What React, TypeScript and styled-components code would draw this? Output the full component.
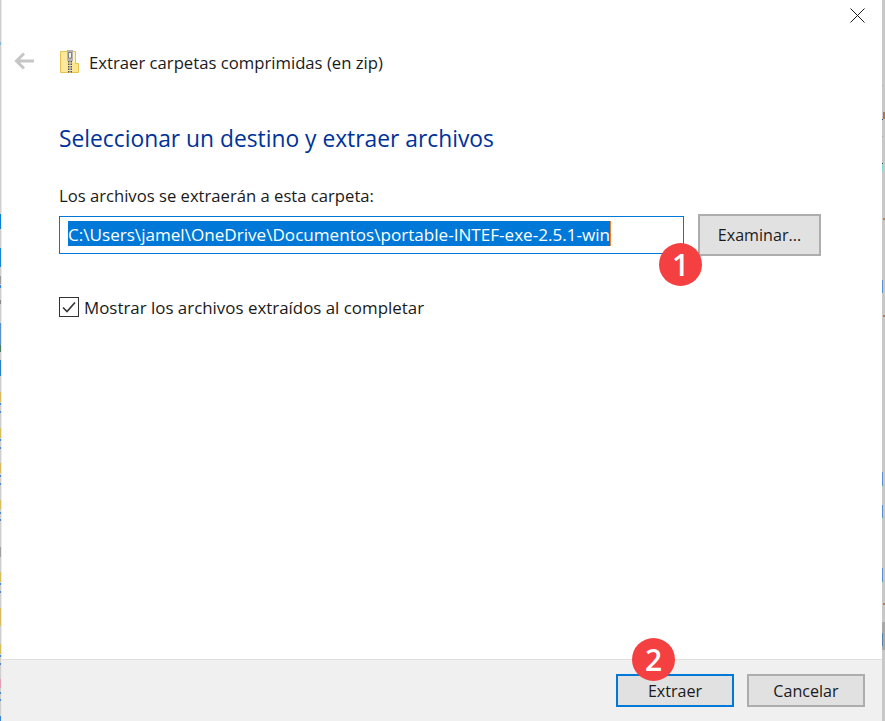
import React from "react";
import styled, { createGlobalStyle } from "styled-components";

// coloured ticks of the windows behind the dialog: [from, to, colour]
const leftMarks: [number, number, string][] = [
    [42, 45, "#7fb4e0"], [214, 229, "#0f7fd0"], [248, 267, "#1a86d0"], [276, 284, "#9a9a9a"],
    [285, 288, "#3f83d0"], [300, 304, "#8a8a8a"], [323, 345, "#5a8fd0"], [345, 352, "#4f7a60"],
    [360, 376, "#2f7fc8"], [392, 402, "#d9bc62"], [403, 405, "#4f86d0"], [411, 413, "#4f86d0"],
    [428, 438, "#d9bc62"], [439, 441, "#4f86d0"], [447, 449, "#4f86d0"], [463, 473, "#d9bc62"],
    [475, 477, "#4f86d0"], [483, 485, "#4f86d0"], [500, 509, "#d9bc62"], [512, 514, "#4f86d0"],
    [519, 521, "#4f86d0"], [547, 557, "#a0a0a0"], [572, 582, "#d9bc62"], [583, 585, "#4f86d0"],
    [591, 593, "#4f86d0"], [608, 626, "#d9bc62"], [644, 654, "#d9bc62"], [655, 657, "#4f86d0"],
    [663, 665, "#4f86d0"], [679, 688, "#e0a0b8"], [692, 694, "#4f86d0"], [699, 701, "#4f86d0"],
    [716, 721, "#3f83d0"],
];

const rightMarks: [number, number, string][] = [
    [85, 86, "#b0b0b0"], [119, 120, "#50505a"], [136, 137, "#a8a8a8"], [163, 164, "#3a4660"],
    [164, 172, "#8fd0d8"], [280, 293, "#5a90d0"], [472, 486, "#5a90d0"], [505, 518, "#5a90d0"],
    [568, 582, "#5a90d0"], [633, 646, "#5a80a8"],
];

const marksToGradient = (marks: [number, number, string][]) => {
    const stops = marks.map(([from, to, colour]) => `transparent ${from}px, ${colour} ${from}px ${to}px, transparent ${to}px`);
    return `linear-gradient(to bottom, ${stops.join(", ")})`;
};

const GlobalStyle = createGlobalStyle`
    html, body {
        margin: 0;
        padding: 0;
        background: #fff;
    }
    body {
        font-family: "Open Sans", "Noto Sans", "Liberation Sans", sans-serif;
        color: #000;
    }
`;

const Screen = styled.div`
    width: 885px;
    height: 721px;
    display: flex;
    overflow: hidden;
`;

const LeftEdge = styled.div`
    width: 2px;
    flex: none;
    background:
        ${marksToGradient(leftMarks)} 0 0 / 1px 100% no-repeat,
        linear-gradient(to right, #cfcfcf 0 1px, #e9e9e9 1px 2px);
`;

const RightEdge = styled.div`
    width: 3px;
    flex: none;
    background:
        linear-gradient(to bottom, transparent 112px, #a87850 112px 119px, transparent 119px) 1px 0 / 2px 100% no-repeat,
        linear-gradient(to bottom, transparent 218px, #b88050 218px 220px, transparent 220px 315px, #b88050 315px 317px, transparent 317px 603px, #b88050 603px 605px, transparent 605px) 1px 0 / 2px 100% no-repeat,
        ${marksToGradient(rightMarks)} 0 0 / 1px 100% no-repeat,
        linear-gradient(to bottom, #c8c8c8 622px, #a8a8a8 622px 650px, #c8c8c8 650px);
`;

const Dialog = styled.div`
    flex: 1;
    min-width: 0;
    display: flex;
    flex-direction: column;
    background: #fff;
`;

const Body = styled.div`
    flex: 1;
    position: relative;
    padding: 0 57px;
`;

const CloseIcon = styled.svg`
    position: absolute;
    top: 8px;
    right: 17px;
    width: 15px;
    height: 15px;
`;

const TitleBar = styled.div`
    height: 24px;
    margin: 49px 0 0 -45px;
    display: flex;
    align-items: center;
`;

const BackIcon = styled.svg`
    width: 20px;
    height: 18px;
    flex: none;
`;

const ZipIcon = styled.svg`
    width: 19px;
    height: 23px;
    flex: none;
    margin-left: 26px;
`;

const TitleText = styled.div`
    margin-left: 10px;
    padding-top: 3px;
    font-size: 16.7px;
    line-height: 24px;
    color: #1a1a1a;
    white-space: nowrap;
`;

const Heading = styled.h1`
    margin: 51px 0 0;
    font-size: 22.8px;
    line-height: 30px;
    font-weight: 400;
    color: #003399;
    white-space: nowrap;
`;

const FieldLabel = styled.div`
    margin-top: 31px;
    font-size: 16.65px;
    line-height: 22px;
    color: #1a1a1a;
    white-space: nowrap;
`;

const PathRow = styled.div`
    margin-top: 7px;
    position: relative;
    display: flex;
    align-items: center;
    gap: 14px;
`;

const PathInput = styled.div`
    box-sizing: border-box;
    width: 625px;
    height: 38px;
    border: 1px solid #0078d7;
    padding: 0 0 4px 8px;
    display: flex;
    align-items: center;
`;

const Selected = styled.span`
    height: 25px;
    line-height: 27px;
    font-size: 17.1px;
    color: #fff;
    background: #0078d7;
    border-right: 1px solid #e8842c;
    white-space: nowrap;
`;

const Badge = styled.div<{ $top: number; $left: number }>`
    position: absolute;
    top: ${(p) => p.$top}px;
    left: ${(p) => p.$left}px;
    width: 43px;
    height: 43px;
    border-radius: 50%;
    background: #f44040;
    color: #fff;
    font-size: 30px;
    font-weight: 600;
    line-height: 43px;
    text-align: center;
`;

const Button = styled.div<{ $width: number; $height: number; $focused?: boolean }>`
    box-sizing: border-box;
    width: ${(p) => p.$width}px;
    height: ${(p) => p.$height}px;
    flex: none;
    background: #e1e1e1;
    border: 2px solid ${(p) => (p.$focused ? "#0078d7" : "#adadad")};
    display: flex;
    align-items: center;
    justify-content: center;
    font-size: 16.1px;
    color: #1a1a1a;
`;

const CheckRow = styled.div`
    margin-top: 38px;
    display: flex;
    align-items: center;
    gap: 5px;
`;

const CheckBox = styled.svg`
    width: 20px;
    height: 20px;
    flex: none;
`;

const CheckLabel = styled.div`
    padding-top: 3px;
    font-size: 16.9px;
    line-height: 22px;
    color: #1a1a1a;
    white-space: nowrap;
`;

const Footer = styled.div`
    box-sizing: border-box;
    height: 62px;
    flex: none;
    position: relative;
    background: #f0f0f0;
    border-top: 1px solid #dfdfdf;
    padding: 14px 17px 0 0;
    display: flex;
    justify-content: flex-end;
    gap: 13px;
`;

export default function App() {
    return (
        <>
            <GlobalStyle />
            <Screen>
                <LeftEdge />
                <Dialog>
                    <Body>
                        <CloseIcon viewBox="0 0 15 15">
                            <path d="M0.5 0.5L14.5 14.5M14.5 0.5L0.5 14.5" stroke="#1a1a1a" strokeWidth="1" fill="none" />
                        </CloseIcon>
                        <TitleBar>
                            <BackIcon viewBox="0 0 20 18">
                                <path d="M20 9H3M10 1.5L2.5 9L10 16.5" stroke="#c6c6c6" strokeWidth="3" fill="none" />
                            </BackIcon>
                            <ZipIcon viewBox="0 0 19 23">
                                <path d="M0.5 1.5H15.5V13.5H18.5V22.5H0.5Z" fill="#fce58f" stroke="#e6c34e" />
                                <path d="M13 2H15V13H13z" fill="#fdf0b8" />
                                <path d="M2 2H7V22H2z" fill="#fde99e" />
                                <path d="M7 0H13V11H7z" fill="#b4b4b4" />
                                <path d="M8.5 2.5H11.5V8H8.5z" fill="#f2f2f2" stroke="#6e6e6e" strokeWidth="0.8" />
                                <path d="M10 11V23" stroke="#555" strokeWidth="4" strokeDasharray="1.5 1" />
                                <path d="M10 11V23" stroke="#dcdcdc" strokeWidth="1" />
                            </ZipIcon>
                            <TitleText>Extraer carpetas comprimidas (en zip)</TitleText>
                        </TitleBar>
                        <Heading>Seleccionar un destino y extraer archivos</Heading>
                        <FieldLabel>Los archivos se extraerán a esta carpeta:</FieldLabel>
                        <PathRow>
                            <PathInput>
                                <Selected>C:\Users\jamel\OneDrive\Documentos\portable-INTEF-exe-2.5.1-win</Selected>
                            </PathInput>
                            <Button $width={123} $height={42}>Examinar...</Button>
                            <Badge $top={29} $left={600}>1</Badge>
                        </PathRow>
                        <CheckRow>
                            <CheckBox viewBox="0 0 20 20">
                                <rect x="0.5" y="0.5" width="19" height="19" fill="#fff" stroke="#333" />
                                <path d="M4 10.5L8 14.5L16 5.5" stroke="#333" strokeWidth="1.6" fill="none" />
                            </CheckBox>
                            <CheckLabel>Mostrar los archivos extraídos al completar</CheckLabel>
                        </CheckRow>
                    </Body>
                    <Footer>
                        <Badge $top={-22} $left={630}>2</Badge>
                        <Button $width={118} $height={33} $focused>Extraer</Button>
                        <Button $width={118} $height={33}>Cancelar</Button>
                    </Footer>
                </Dialog>
                <RightEdge />
            </Screen>
        </>
    );
}
